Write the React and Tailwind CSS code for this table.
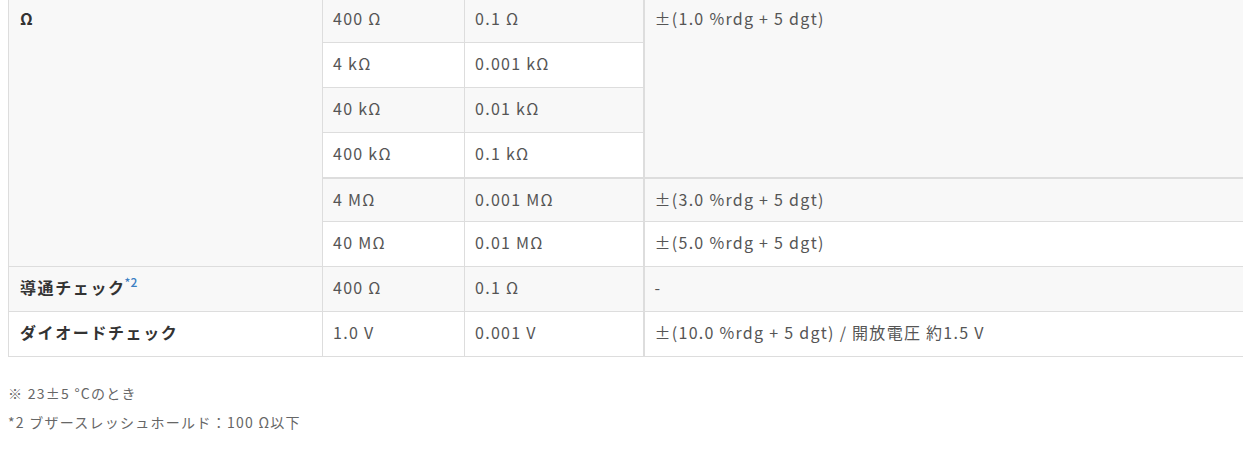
import React from "react";

const font = { fontFamily: '"Noto Sans CJK JP", "Noto Sans", sans-serif' };

const G = "bg-[#f8f8f8]";
const W = "bg-white";
const base = "border border-[#dddddd] px-[10px] pt-[8px] pb-0 align-top text-[16px] leading-[24px] tracking-[0.08em] text-[#555555]";
const cell = `${base} h-[45px]`;
const cell5 = `${base} h-[44px] pt-[7px] border-t-2`;
const head = "border border-[#dddddd] px-[11px] pt-[8px] pb-0 align-top text-[16px] leading-[24px] tracking-[0.1em] font-bold text-[#333333]";

export default function App() {
  return (
    <div className="w-full overflow-hidden bg-white h-[451px]" style={font}>
      <div className="pl-2 -mt-[3px]">
        <table className="border-collapse w-[1242px] table-fixed">
          <colgroup>
            <col className="w-[314px]" />
            <col className="w-[142px]" />
            <col className="w-[179px]" />
            <col />
          </colgroup>
          <tbody>
            <tr className={G}>
              <td rowSpan={6} className={`${head} ${G}`}>Ω</td>
              <td className={cell}>400 Ω</td>
              <td className={cell}>0.1 Ω</td>
              <td rowSpan={4} className={`${cell} ${G} border-l-2`}>±(1.0 %rdg + 5 dgt)</td>
            </tr>
            <tr className={W}>
              <td className={cell}>4 kΩ</td>
              <td className={cell}>0.001 kΩ</td>
            </tr>
            <tr className={G}>
              <td className={cell}>40 kΩ</td>
              <td className={cell}>0.01 kΩ</td>
            </tr>
            <tr className={W}>
              <td className={cell}>400 kΩ</td>
              <td className={cell}>0.1 kΩ</td>
            </tr>
            <tr className={G}>
              <td className={cell5}>4 MΩ</td>
              <td className={cell5}>0.001 MΩ</td>
              <td className={`${cell5} border-l-2`}>±(3.0 %rdg + 5 dgt)</td>
            </tr>
            <tr className={W}>
              <td className={cell}>40 MΩ</td>
              <td className={cell}>0.01 MΩ</td>
              <td className={`${cell} border-l-2`}>±(5.0 %rdg + 5 dgt)</td>
            </tr>
            <tr className={G}>
              <td className={head}>
                導通チェック<span className="text-[12px] leading-none font-medium tracking-normal text-[#3b7fc4] relative -top-[7px] -ml-[1px]">*2</span>
              </td>
              <td className={cell}>400 Ω</td>
              <td className={cell}>0.1 Ω</td>
              <td className={`${cell} border-l-2`}>-</td>
            </tr>
            <tr className={W}>
              <td className={head}>ダイオードチェック</td>
              <td className={cell}>1.0 V</td>
              <td className={cell}>0.001 V</td>
              <td className={`${cell} border-l-2`}>±(10.0 %rdg + 5 dgt) / 開放電圧 約1.5 V</td>
            </tr>
          </tbody>
        </table>
        <div className="mt-[26px] text-[14px] leading-[20px] tracking-[0.09em] text-[#666666]">
          <p className="mb-[9px]">※ 23±5 °Cのとき</p>
          <p>*2 ブザースレッシュホールド：100 Ω以下</p>
        </div>
      </div>
    </div>
  );
}
